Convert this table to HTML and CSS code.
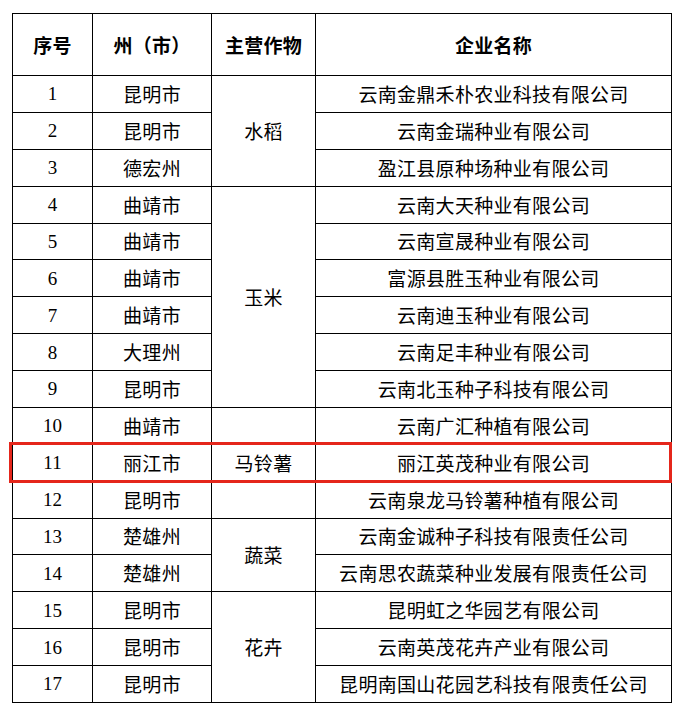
FILE: index.html
```html
<!DOCTYPE html>
<html lang="zh-CN">
<head>
<meta charset="utf-8">
<title>企业名单</title>
<link rel="stylesheet" href="styles.css">
</head>
<body>
<div class="wrap">
<table class="list">
<colgroup>
<col class="c-no"><col class="c-city"><col class="c-crop"><col class="c-name">
</colgroup>
<thead>
<tr class="head"><th>序号</th><th>州（市）</th><th>主营作物</th><th>企业名称</th></tr>
</thead>
<tbody>
<tr><td class="num">1</td><td>昆明市</td><td rowspan="3">水稻</td><td>云南金鼎禾朴农业科技有限公司</td></tr>
<tr><td class="num">2</td><td>昆明市</td><td>云南金瑞种业有限公司</td></tr>
<tr><td class="num">3</td><td>德宏州</td><td>盈江县原种场种业有限公司</td></tr>
<tr><td class="num">4</td><td>曲靖市</td><td rowspan="6">玉米</td><td>云南大天种业有限公司</td></tr>
<tr><td class="num">5</td><td>曲靖市</td><td>云南宣晟种业有限公司</td></tr>
<tr><td class="num">6</td><td>曲靖市</td><td>富源县胜玉种业有限公司</td></tr>
<tr><td class="num">7</td><td>曲靖市</td><td>云南迪玉种业有限公司</td></tr>
<tr><td class="num">8</td><td>大理州</td><td>云南足丰种业有限公司</td></tr>
<tr><td class="num">9</td><td>昆明市</td><td>云南北玉种子科技有限公司</td></tr>
<tr><td class="num">10</td><td>曲靖市</td><td rowspan="3">马铃薯</td><td>云南广汇种植有限公司</td></tr>
<tr><td class="num">11</td><td>丽江市</td><td>丽江英茂种业有限公司</td></tr>
<tr><td class="num">12</td><td>昆明市</td><td>云南泉龙马铃薯种植有限公司</td></tr>
<tr><td class="num">13</td><td>楚雄州</td><td rowspan="2">蔬菜</td><td>云南金诚种子科技有限责任公司</td></tr>
<tr><td class="num">14</td><td>楚雄州</td><td>云南思农蔬菜种业发展有限责任公司</td></tr>
<tr><td class="num">15</td><td>昆明市</td><td rowspan="3">花卉</td><td>昆明虹之华园艺有限公司</td></tr>
<tr><td class="num">16</td><td>昆明市</td><td>云南英茂花卉产业有限公司</td></tr>
<tr><td class="num">17</td><td>昆明市</td><td>昆明南国山花园艺科技有限责任公司</td></tr>
</tbody>
</table>
<div class="highlight"></div>
</div>
</body>
</html>
```
FILE: styles.css
```css
html, body {
  margin: 0;
  padding: 0;
  background: #ffffff;
}
body {
  font-family: "Noto Sans CJK SC", "Noto Sans", sans-serif;
  color: #000000;
}
.wrap {
  position: relative;
  width: 659px;
  margin: 13px 0 0 12px;
}
.list {
  border-collapse: collapse;
  table-layout: fixed;
  width: 659px;
  font-size: 19px;
  letter-spacing: 0.3px;
}
.c-no { width: 80px; }
.c-city { width: 119px; }
.c-crop { width: 104px; }
.c-name { width: 356px; }
.list th, .list td {
  border: 1px solid #000000;
  padding: 0 0 1px 0;
  text-align: center;
  vertical-align: middle;
  white-space: nowrap;
  line-height: 1;
}
.list th {
  font-weight: 700;
}
.head {
  height: 62px;
}
.list tbody tr {
  height: 36.88px;
}
.list td.num {
  font-family: "Liberation Serif", serif;
  letter-spacing: 0;
  padding: 0;
}
.highlight {
  position: absolute;
  left: -3px;
  top: 429px;
  width: 657px;
  height: 35px;
  border: 3px solid #e5261b;
  pointer-events: none;
}
```
